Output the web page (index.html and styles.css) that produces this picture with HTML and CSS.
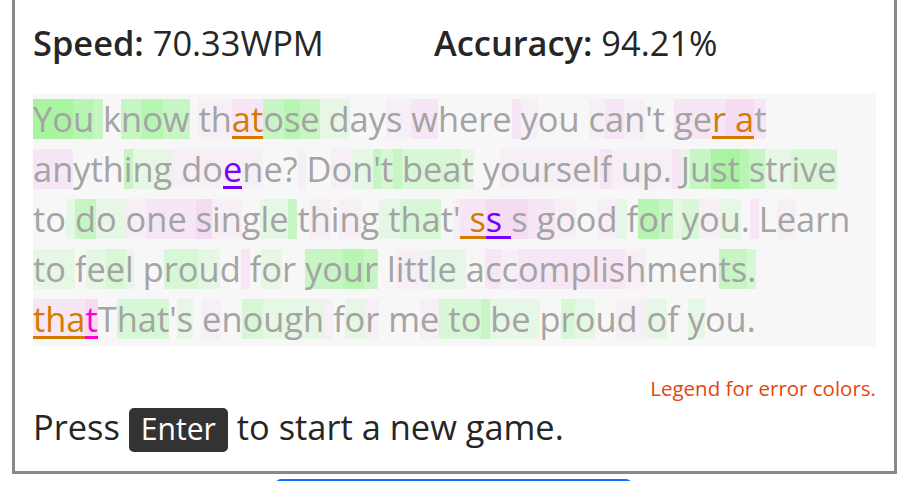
FILE: index.html
```html
<!DOCTYPE html>
<html lang="en">
<head>
<meta charset="utf-8">
<title>Typing game</title>
<link rel="stylesheet" href="styles.css">
</head>
<body>
<main class="game">
  <div class="stats">
    <div class="stat"><b>Speed:</b> 70.33WPM</div>
    <div class="stat"><b>Accuracy:</b> 94.21%</div>
  </div>
  <div class="passage">
<div class="line"><span class="e">Y</span><span class="e">o</span><span class="d">u</span><span class="c"> </span>k<span class="c">n</span><span class="d">o</span><span class="c">w</span> <span class="p">t</span><span class="p">h</span><span class="q eo">a</span><span class="q eo">t</span><span class="c">o</span><span class="d">s</span><span class="c">e</span><span class="a"> </span><span class="a">d</span>ay<span class="p">s</span><span class="p"> </span><span class="q">w</span>here<span class="q"> </span><span class="p">y</span>ou <span class="p">c</span><span class="q">a</span><span class="p">n</span>'t <span class="q">g</span><span class="q">e</span><span class="q eo">r</span><span class="r eo"> </span><span class="r eo">a</span><span class="q">t</span></div>
<div class="line"><span class="q">a</span><span class="q">n</span>yth<span class="c">i</span><span class="a">n</span><span class="a">g</span><span class="p"> </span><span class="p">d</span><span class="p">o</span><span class="p ep">e</span><span class="p">n</span>e?<span class="p"> </span>D<span class="p">o</span><span class="a">n</span><span class="c">'</span><span class="b">t</span><span class="c"> </span><span class="b">b</span><span class="b">e</span><span class="b">a</span><span class="a">t</span> y<span class="p">o</span><span class="p">u</span><span class="p">r</span><span class="p">s</span><span class="p">e</span><span class="p">l</span><span class="q">f</span><span class="p"> </span><span class="p">u</span><span class="p">p</span><span class="p">.</span><span class="q"> </span><span class="a">J</span><span class="c">u</span><span class="e">s</span><span class="e">t</span><span class="d"> </span><span class="c">s</span><span class="a">t</span><span class="a">r</span><span class="b">i</span><span class="b">v</span><span class="b">e</span></div>
<div class="line">to<span class="a"> </span><span class="c">d</span><span class="a">o</span><span class="a"> </span><span class="p">o</span><span class="q">n</span><span class="q">e</span><span class="q"> </span><span class="r">s</span><span class="p">i</span><span class="p">n</span>g<span class="a">l</span><span class="a">e</span><span class="c"> </span>t<span class="p">h</span>i<span class="p">n</span>g<span class="a"> </span><span class="a">t</span><span class="b">h</span><span class="b">a</span>t<span class="p">'</span><span class="q eo"> </span><span class="q eo">s</span><span class="r ep">s</span><span class="r ep"> </span><span class="r">s</span><span class="q"> </span><span class="q">g</span><span class="p">o</span>o<span class="p">d</span><span class="a"> </span>f<span class="d">o</span><span class="c">r</span><span class="a"> </span><span class="b">y</span><span class="p">o</span><span class="a">u</span>.<span class="q"> </span>L<span class="p">e</span>arn</div>
<div class="line"><span class="a">t</span><span class="a">o</span><span class="a"> </span>f<span class="a">e</span><span class="b">e</span><span class="a">l</span> p<span class="b">r</span><span class="b">o</span><span class="a">u</span>d<span class="q"> </span>f<span class="a">o</span>r <span class="c">y</span><span class="c">o</span><span class="d">u</span><span class="c">r</span> l<span class="p">i</span><span class="p">t</span><span class="p">t</span><span class="a">l</span><span class="a">e</span><span class="a"> </span>a<span class="q">c</span><span class="p">c</span><span class="q">o</span><span class="q">m</span><span class="q">p</span><span class="q">l</span><span class="q">i</span><span class="q">s</span><span class="p">h</span>men<span class="c">t</span><span class="c">s</span><span class="b">.</span></div>
<div class="line"><span class="q eo">t</span><span class="q eo">h</span><span class="q eo">a</span><span class="r em">t</span>T<span class="b">h</span><span class="b">a</span><span class="b">t</span>'<span class="a">s</span> <span class="p">e</span>n<span class="b">o</span><span class="a">u</span><span class="a">g</span><span class="a">h</span><span class="p"> </span>f<span class="a">o</span><span class="p">r</span> m<span class="p">e</span><span class="b"> </span><span class="b">t</span><span class="b">o</span><span class="c"> </span><span class="a">b</span><span class="a">e</span><span class="a"> </span>p<span class="b">r</span><span class="a">o</span>u<span class="p">d</span><span class="p"> </span><span class="a">o</span>f <span class="a">y</span>ou.</div>
  </div>
  <p class="legend">Legend for error colors.</p>
  <p class="prompt">Press <kbd>Enter</kbd> to start a new game.</p>
</main>
<button class="next" type="button" aria-label="Show legend"></button>
</body>
</html>
```
FILE: styles.css
```css
html, body {
  margin: 0;
  background: #ffffff;
  overflow: hidden;
}
body {
  font-family: "Open Sans", "Noto Sans", sans-serif;
}
.game {
  margin: -3px 9px 0 12px;
  border: 3px solid #888888;
  padding: 18px 18px 19px;
}
.stats {
  display: grid;
  grid-template-columns: 401px auto;
  font-size: 34.4px;
  line-height: 50px;
  color: #262626;
}
.stat b {
  font-weight: 600;
}
.passage {
  margin-top: 26px;
  background: #f7f7f7;
  padding-bottom: 2px;
  font-size: 34.4px;
  line-height: 50px;
  color: #a4a4a4;
}
.line {
  height: 50px;
  white-space: pre;
}
.line span {
  display: inline-block;
  height: 40px;
  line-height: 40px;
  white-space: pre;
}
.a { background: #e6f7e5; }
.b { background: #d8f7d6; }
.c { background: #c7f6c4; }
.d { background: #b6f5b2; }
.e { background: #a8f4a0; }
.p { background: #f6eff6; }
.q { background: #f7e6f6; }
.r { background: #f6dcf3; }
.line .eo { color: #d57b00; box-shadow: inset 0 -3px 0 #d57b00; }
.line .ep { color: #7700ff; box-shadow: inset 0 -3px 0 #7700ff; }
.line .em { color: #ff00cc; box-shadow: inset 0 -3px 0 #ff00cc; }
.legend {
  margin: 30px 0 0;
  text-align: right;
  font-size: 20.5px;
  line-height: 24px;
  color: #e2470f;
}
.prompt {
  margin: 2px 0 0;
  font-size: 34.4px;
  line-height: 50px;
  color: #262626;
}
kbd {
  display: inline-block;
  font-family: inherit;
  font-size: 0.875em;
  line-height: 38px;
  padding: 2px 12px 4px;
  background: #333333;
  color: #ffffff;
  border-radius: 5px;
}
.next {
  display: block;
  width: 357px;
  height: 40px;
  margin: 5px auto 0;
  border: none;
  border-radius: 6px;
  background: #0d6efd;
}
```
